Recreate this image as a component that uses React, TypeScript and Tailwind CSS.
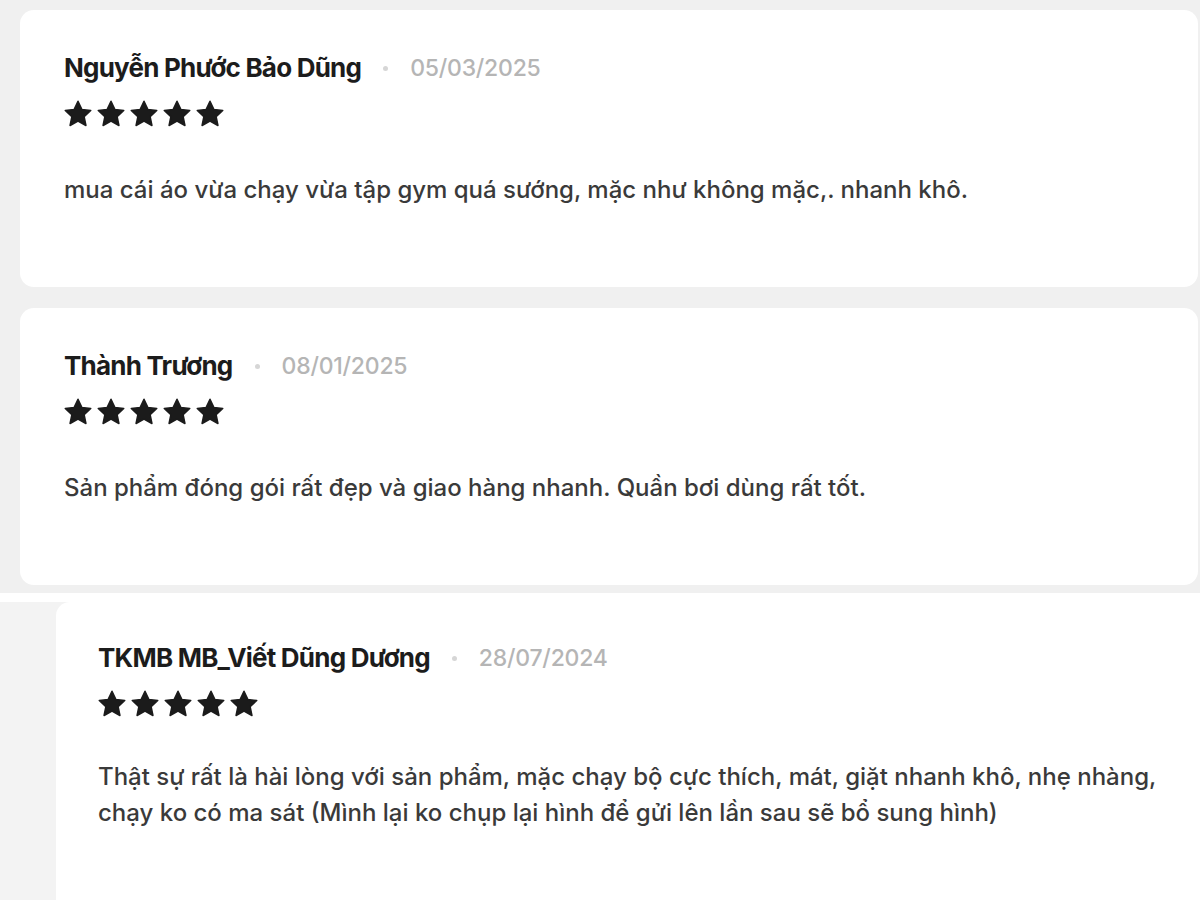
import { FC } from "react"

interface Review {
  name: string
  date: string
  text: string
}

const reviews: Review[] = [
  {
    name: "Nguyễn Phước Bảo Dũng",
    date: "05/03/2025",
    text: "mua cái áo vừa chạy vừa tập gym quá sướng, mặc như không mặc,. nhanh khô.",
  },
  {
    name: "Thành Trương",
    date: "08/01/2025",
    text: "Sản phẩm đóng gói rất đẹp và giao hàng nhanh. Quần bơi dùng rất tốt.",
  },
]

const last: Review = {
  name: "TKMB MB_Viết Dũng Dương",
  date: "28/07/2024",
  text: "Thật sự rất là hài lòng với sản phẩm, mặc chạy bộ cực thích, mát, giặt nhanh khô, nhẹ nhàng, chạy ko có ma sát (Mình lại ko chụp lại hình để gửi lên lần sau sẽ bổ sung hình)",
}

const Star: FC = () => (
  <svg viewBox="0 0 24 24" className="w-[30px] h-[30px]" fill="#1b1b1b">
    <path
      d="M12 1.8l3.05 6.55 7.15.85-5.3 4.9 1.45 7.1L12 17.6 5.65 21.2l1.45-7.1-5.3-4.9 7.15-.85z"
      stroke="#1b1b1b"
      strokeWidth="1.2"
      strokeLinejoin="round"
    />
  </svg>
)

const ReviewBody: FC<{ review: Review; textGap: string }> = ({ review, textGap }) => (
  <>
    {/* header */}
    <div className="flex items-center h-[32px]">
      <span className="text-[26px] leading-[32px] font-bold tracking-[-0.03em] text-[#1c1c1c]">
        {review.name}
      </span>
      <span className="ml-[22px] w-[5px] h-[5px] rounded-full bg-[#d6d6d6]" />
      <span className="ml-[22px] text-[23px] leading-[32px] font-medium tracking-[-0.01em] text-[#b5b5b5]">
        {review.date}
      </span>
    </div>

    {/* stars */}
    <div className="flex gap-[3px] mt-[15px] -ml-[1px]">
      {[0, 1, 2, 3, 4].map((i) => (
        <Star key={i} />
      ))}
    </div>

    {/* text */}
    <p className={`${textGap} text-[24px] font-medium leading-[36px] text-[#3a3a3a]`}>
      {review.text}
    </p>
  </>
)

const App: FC = () => {
  return (
    <div
      className="w-[1200px] h-[900px] overflow-hidden bg-white"
      style={{ fontFamily: "Inter, 'Noto Sans', sans-serif" }}
    >
      {/* first screenshot */}
      <div className="bg-[#f0f0f0] pt-[10px] pb-[8px] pl-[20px] pr-[2px] flex flex-col gap-[21px]">
        {reviews.map((r) => (
          <div
            key={r.name}
            className="h-[277px] bg-white rounded-[14px] pl-[44px] pt-[42px]"
          >
            <ReviewBody review={r} textGap="mt-[43px]" />
          </div>
        ))}
      </div>

      {/* second screenshot */}
      <div className="pt-[9px] bg-white">
        <div className="flex bg-[#f3f3f3]">
          <div className="w-[56px] shrink-0" />
          <div className="flex-1 h-[298px] bg-white rounded-tl-[14px] pl-[42px] pt-[40px]">
            <div className="max-w-[1070px]">
              <ReviewBody review={last} textGap="mt-[40px]" />
            </div>
          </div>
        </div>
      </div>
    </div>
  )
}

export default App
